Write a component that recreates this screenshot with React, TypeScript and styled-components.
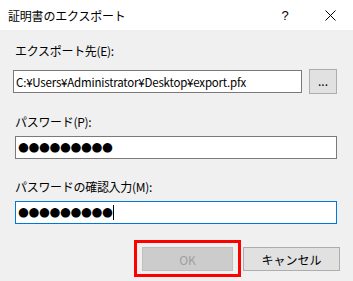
import styled, { createGlobalStyle } from "styled-components";

const GlobalStyle = createGlobalStyle`
  html, body {
    margin: 0;
    padding: 0;
    background: #f0f0f0;
  }
  body {
    font-family: "Noto Sans CJK JP", "Noto Sans", sans-serif;
    font-size: 12px;
    color: #000;
  }
`;

const Window = styled.div`
  width: 353px;
  height: 281px;
  background: #f0f0f0;
  display: flex;
  flex-direction: column;
  overflow: hidden;
`;

const TitleBar = styled.div`
  height: 30px;
  background: #fff;
  display: flex;
  align-items: center;
  padding-left: 8px;
`;

const TitleText = styled.div`
  flex: 1;
  font-size: 12px;
  letter-spacing: -0.2px;
`;

const CaptionButton = styled.div<{ $w: number }>`
  width: ${(p) => p.$w}px;
  height: 30px;
  display: flex;
  align-items: center;
  justify-content: center;
  font-family: "Liberation Sans", sans-serif;
  font-size: 13px;
`;

const Content = styled.div`
  padding: 0 16px 0 13px;
  display: flex;
  flex-direction: column;
`;

const Label = styled.div<{ $top: number }>`
  height: 20px;
  line-height: 20px;
  margin-top: ${(p) => p.$top}px;
  padding-left: 2px;
  font-size: 12px;
  letter-spacing: -0.3px;
`;

const Row = styled.div<{ $top: number; $indent?: number }>`
  display: flex;
  align-items: center;
  gap: 7px;
  margin-top: ${(p) => p.$top}px;
  padding-left: ${(p) => p.$indent ?? 0}px;
`;

const Input = styled.div<{ $focused?: boolean; $w?: number }>`
  box-sizing: border-box;
  height: 23px;
  width: ${(p) => (p.$w ? `${p.$w}px` : "auto")};
  flex: ${(p) => (p.$w ? "none" : "1")};
  background: #fff;
  border: 1px solid ${(p) => (p.$focused ? "#0078d7" : "#7a7a7a")};
  display: flex;
  align-items: center;
  padding-left: 2px;
  white-space: nowrap;
  overflow: hidden;
`;

const PathText = styled.span`
  font-size: 11.5px;
  letter-spacing: -0.2px;
`;

const Mask = styled.span`
  font-family: "DejaVu Sans", sans-serif;
  font-size: 12.5px;
  line-height: 1;
  letter-spacing: -0.4px;
`;

const Caret = styled.span`
  display: inline-block;
  width: 1px;
  height: 15px;
  background: #000;
  margin-left: 0;
`;

const BrowseButton = styled.div`
  box-sizing: border-box;
  width: 31px;
  height: 25px;
  background: #e1e1e1;
  border: 1px solid #adadad;
  display: flex;
  align-items: center;
  justify-content: center;
  font-size: 12px;
  padding-bottom: 3px;
`;

const ButtonRow = styled.div`
  display: flex;
  justify-content: flex-end;
  gap: 10px;
  margin-top: 23px;
  padding-right: 13px;
`;

const Button = styled.div<{ $disabled?: boolean; $w: number; $marked?: boolean }>`
  position: relative;
  box-sizing: border-box;
  width: ${(p) => p.$w}px;
  height: 24px;
  background: ${(p) => (p.$disabled ? "#cccccc" : "#e1e1e1")};
  border: 1px solid ${(p) => (p.$disabled ? "#bfbfbf" : "#adadad")};
  color: ${(p) => (p.$disabled ? "#a0a0a0" : "#000")};
  display: flex;
  align-items: center;
  justify-content: center;
  font-size: 12px;
  ${(p) =>
    p.$marked &&
    `
    &::after {
      content: "";
      position: absolute;
      left: -9px;
      right: -9px;
      top: -8px;
      bottom: -7px;
      border: 3px solid #ff0000;
    }
  `}
`;

export default function App() {
  return (
    <Window>
      <GlobalStyle />
      <TitleBar>
        <TitleText>証明書のエクスポート</TitleText>
        <CaptionButton $w={44}>?</CaptionButton>
        <CaptionButton $w={46}>
          <svg width="11" height="11" viewBox="0 0 11 11">
            <path d="M0.5 0.5 L10.5 10.5 M10.5 0.5 L0.5 10.5" stroke="#000" strokeWidth="1" />
          </svg>
        </CaptionButton>
      </TitleBar>
      <Content>
        <Label $top={11}>エクスポート先(E):</Label>
        <Row $top={8}>
          <Input $w={289}>
            <PathText>C:¥Users¥Administrator¥Desktop¥export.pfx</PathText>
          </Input>
          <BrowseButton>...</BrowseButton>
        </Row>
        <Label $top={18}>パスワード(P):</Label>
        <Row $top={4} $indent={2}>
          <Input>
            <Mask>●●●●●●●●●</Mask>
          </Input>
        </Row>
        <Label $top={18}>パスワードの確認入力(M):</Label>
        <Row $top={4} $indent={2}>
          <Input $focused>
            <Mask>●●●●●●●●●</Mask>
            <Caret />
          </Input>
        </Row>
      </Content>
      <ButtonRow>
        <Button $w={91} $disabled $marked>
          OK
        </Button>
        <Button $w={97}>キャンセル</Button>
      </ButtonRow>
    </Window>
  );
}
